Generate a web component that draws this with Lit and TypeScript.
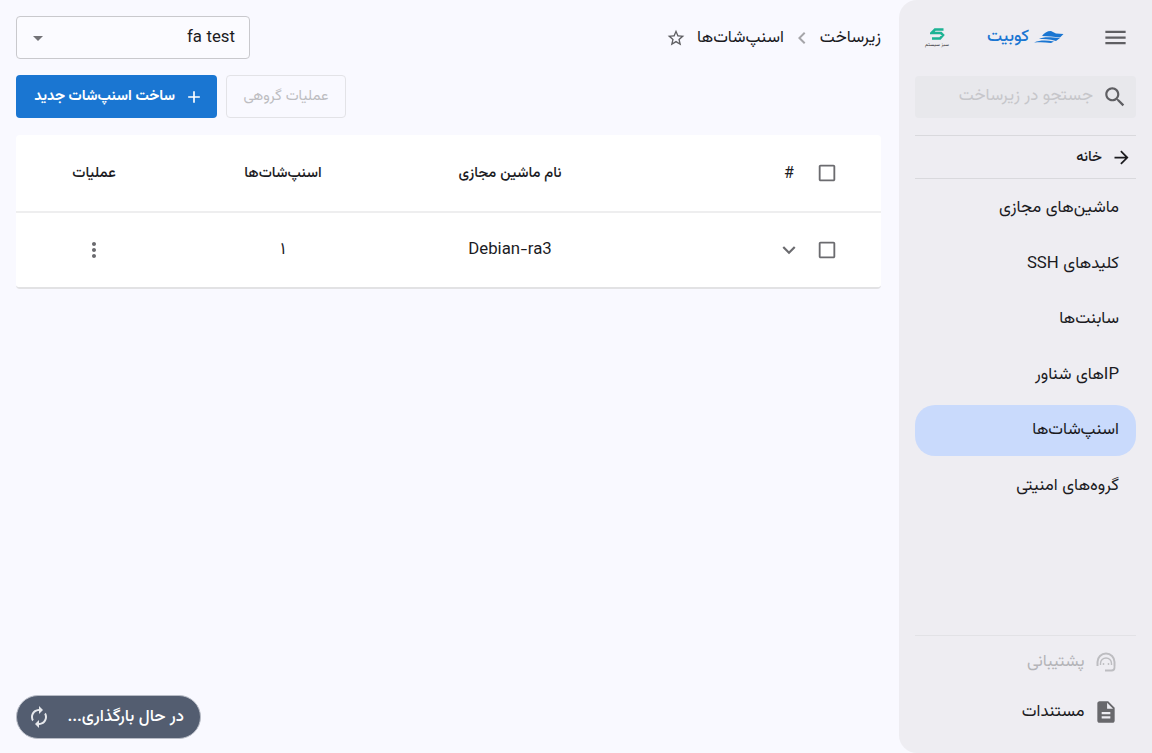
import { LitElement, html, css } from "lit";
import { customElement } from "lit/decorators.js";

const icon = (d: string, size = 24) =>
  html`<svg width=${size} height=${size} viewBox="0 0 24 24" fill="currentColor"><path d=${d}></path></svg>`;

const I = {
  menu: "M3 18h18v-2H3v2zm0-5h18v-2H3v2zm0-7v2h18V6H3z",
  search: "M15.5 14h-.79l-.28-.27C15.41 12.59 16 11.11 16 9.5 16 5.91 13.09 3 9.5 3S3 5.91 3 9.5 5.91 16 9.5 16c1.61 0 3.09-.59 4.23-1.57l.27.28v.79l5 4.99L20.49 19l-4.99-5zm-6 0C7.01 14 5 11.99 5 9.5S7.01 5 9.5 5 14 7.01 14 9.5 11.99 14 9.5 14z",
  arrow: "M12 4l-1.41 1.41L16.17 11H4v2h12.17l-5.58 5.59L12 20l8-8z",
  star: "M22 9.24l-7.19-.62L12 2 9.19 8.63 2 9.24l5.46 4.73L5.82 21 12 17.27 18.18 21l-1.63-7.03L22 9.24zM12 15.4l-3.76 2.27 1-4.28-3.32-2.88 4.38-.38L12 6.1l1.71 4.04 4.38.38-3.32 2.88 1 4.28L12 15.4z",
  chevL: "M15.41 7.41L14 6l-6 6 6 6 1.41-1.41L10.83 12z",
  plus: "M19 13h-6v6h-2v-6H5v-2h6V5h2v6h6v2z",
  check: "M19 5v14H5V5h14m0-2H5c-1.1 0-2 .9-2 2v14c0 1.1.9 2 2 2h14c1.1 0 2-.9 2-2V5c0-1.1-.9-2-2-2z",
  down: "M7.41 8.59L12 13.17l4.59-4.58L18 10l-6 6-6-6z",
  dots: "M12 8c1.1 0 2-.9 2-2s-.9-2-2-2-2 .9-2 2 .9 2 2 2zm0 2c-1.1 0-2 .9-2 2s.9 2 2 2 2-.9 2-2-.9-2-2-2zm0 6c-1.1 0-2 .9-2 2s.9 2 2 2 2-.9 2-2-.9-2-2-2z",
  doc: "M14 2H6c-1.1 0-1.99.9-1.99 2L4 20c0 1.1.89 2 1.99 2H18c1.1 0 2-.9 2-2V8l-6-6zm2 16H8v-2h8v2zm0-4H8v-2h8v2zm-3-5V3.5L18.5 9H13z",
  renew: "M12 6v3l4-4-4-4v3c-4.42 0-8 3.58-8 8 0 1.57.46 3.03 1.24 4.26L6.7 14.8c-.45-.83-.7-1.79-.7-2.8 0-3.31 2.69-6 6-6zm6.76 1.74L17.3 9.2c.44.84.7 1.79.7 2.8 0 3.31-2.69 6-6 6v-3l-4 4 4 4v-3c4.42 0 8-3.58 8-8 0-1.57-.46-3.03-1.24-4.26z",
};

@customElement("app-root")
export class AppRoot extends LitElement {
  static styles = css`
    :host {
      display: block;
      width: 1152px;
      height: 753px;
      overflow: hidden;
      background: #f9f9ff;
      font-family: Vazirmatn, Roboto, "Noto Sans", sans-serif;
      color: #1b1b1f;
    }
    svg { display: block; flex: none; }
    .page { display: flex; direction: rtl; height: 753px; }

    /* Sidebar */
    .side {
      width: 253px; flex: none; box-sizing: border-box;
      background: #eeedf2;
      border-top-left-radius: 18px; border-bottom-left-radius: 18px;
      padding: 16px 16px 0 16px;
      display: flex; flex-direction: column;
    }
    .top { display: flex; align-items: center; height: 42px; padding-right: 7px; }
    .menu { color: #5f5f63; margin-left: 38px; }
    .brand { display: flex; align-items: center; gap: 5px; color: #1a76d2; font-size: 16.8px; font-weight: 500; }
    .sabz { margin-right: auto; width: 22px; margin-left: 11px; display: flex; flex-direction: column; align-items: center; gap: 2px; padding-top: 2px; }
    .sabz span { font-size: 5px; line-height: 6px; color: #333; white-space: nowrap; }
    .search {
      margin-top: 18px; height: 42px; background: #e8e8ec; border-radius: 4px;
      display: flex; align-items: center; padding: 0 8px 0 0; gap: 9px; color: #5f5f63;
    }
    .search span { color: #c6c6ca; font-size: 16.8px; padding-bottom: 3px; }
    .home {
      margin-top: 17px; height: 44px; border-top: 1px solid #d9d9dd; border-bottom: 1px solid #d9d9dd;
      display: flex; align-items: center; padding: 0 4px; gap: 9px; box-sizing: border-box;
      font-size: 14.7px; font-weight: 500;
    }
    .nav { display: flex; flex-direction: column; gap: 4.5px; margin-top: 4px; }
    .nav a {
      height: 51px; box-sizing: border-box; display: flex; align-items: center; padding: 0 17px 1px;
      font-size: 16.8px; border-radius: 20px; color: #1b1b1f;
    }
    .nav a.on { background: #c9dafc; }
    .foot { margin-top: auto; border-top: 1px solid #e2e2e6; padding: 1px 17px 16px 0; }
    .fitem { height: 50px; display: flex; align-items: center; gap: 8.5px; font-size: 16.8px; }
    .fitem.off { color: #b4b4b8; }
    .fitem svg { color: #68686c; }
    .fitem.off svg { color: #bdbdc1; margin: 0 3px; }

    /* Main */
    .main { flex: 1; padding: 16px 18px 0 16px; min-width: 0; position: relative; }
    .head { display: flex; align-items: center; height: 43px; }
    .crumbs { display: flex; align-items: center; font-size: 16.8px; color: #1b1b1f; }
    .crumbs .sep { color: #a5a5a9; margin: 0 6px; }
    .crumbs .star { color: #5f5f63; margin-right: 11px; }
    .select {
      margin-right: auto; width: 234px; height: 43px; box-sizing: border-box;
      border: 1px solid #c9c9cd; border-radius: 4px; background: #fbfbff;
      display: flex; align-items: center; justify-content: space-between; padding: 0 14px 0 16px;
      font-size: 16.8px;
    }
    .caret { width: 0; height: 0; border-left: 5px solid transparent; border-right: 5px solid transparent; border-top: 5px solid #737377; margin-top: 2px; }
    .bar { display: flex; justify-content: flex-end; gap: 9px; margin-top: 16px; height: 43px; }
    .btn { box-sizing: border-box; height: 43px; border-radius: 4px; display: flex; align-items: center; font-size: 14.7px; }
    .btn.off { width: 120px; justify-content: center; border: 1px solid #e3e3e7; color: #bdbdc1; }
    .btn.new { width: 201px; background: #1a76d2; color: #fff; font-weight: 700; padding: 0 13px; gap: 9px; }
    .table {
      margin-top: 17px; background: #fff; border-radius: 4px;
      border-bottom: 2px solid #e2e2e4; box-sizing: border-box; height: 154px;
    }
    .row {
      display: grid; grid-template-columns: 38px 38px 371px 232px 146px;
      padding-right: 35px; align-items: center; font-size: 14.8px; box-sizing: border-box;
    }
    .row.h { height: 78px; border-bottom: 2px solid #eeeeef; font-weight: 500; }
    .row.b { height: 74px; font-size: 16.8px; padding-bottom: 1px; }
    .row > div { display: flex; justify-content: center; color: #1b1b1f; }
    .row > .name { padding-right: 149px; }
    .row > .hash { font-size: 16px; font-weight: 400; padding-top: 2px; }
    .row .ico { color: #6b6b6f; }
    .loading {
      position: absolute; left: 16px; bottom: 14px; width: 185px; height: 44px;
      box-sizing: border-box; border-radius: 22px; background: #535d70; border: 1px solid #b8bcc6;
      color: #fff; display: flex; align-items: center; justify-content: space-between;
      padding: 0 16px 0 10px; font-size: 16.8px; font-weight: 500;
    }
    .loading svg { color: #e6e8ec; }
  `;

  render() {
    return html`
      <div class="page">
        <aside class="side">
          <div class="top">
            <span class="menu">${icon(I.menu, 27)}</span>
            <span class="brand">
              <svg width="30" height="13" viewBox="0 0 30 13" fill="#1a76d2">
                <path d="M8 5C10 2 13 0 17 0L22 2.5L29.5 3L26 6.5C20 6 14 5 8 5Z"></path>
                <path d="M5 8C9 6 14 6 26 7L22 10C15 8 10 8 5 8Z"></path>
                <path d="M0 11.5C6 9 12 9 20 10.5L17 12C11 11 5 11 0 11.5Z"></path>
              </svg>
              <span>کوبیت</span>
            </span>
            <span class="sabz">
              <svg width="15" height="12" viewBox="0 0 15 12" fill="none" stroke="#1db394" stroke-width="2.6">
                <path d="M13.5 1.5H5L1.5 5H11L13 7L10 10.5H2"></path>
              </svg>
              <span>سبز سیستم</span>
            </span>
          </div>
          <div class="search">${icon(I.search, 26)}<span>جستجو در زیرساخت</span></div>
          <div class="home">${icon(I.arrow, 21)}<span>خانه</span></div>
          <nav class="nav">
            <a>ماشین‌های مجازی</a>
            <a>کلیدهای SSH</a>
            <a>سابنت‌ها</a>
            <a>IPهای شناور</a>
            <a class="on">اسنپ‌شات‌ها</a>
            <a>گروه‌های امنیتی</a>
          </nav>
          <div class="foot">
            <div class="fitem off">
              <svg width="20" height="20" viewBox="0 0 20 20" fill="none" stroke="currentColor" stroke-width="2">
                <path d="M1.5 14V10a8.5 8.5 0 0 1 17 0V14"></path>
                <path d="M4.5 13V11.500a5.500 5.500 0 0 1 11 0V13" stroke-width="1.400"></path>
                <path d="M18.500 14V15.500A3 3 0 0 1 15.500 18.500H9" stroke-width="1.800"></path>
                <circle cx="7.500" cy="12" r="0.900" fill="currentColor" stroke="none"></circle>
                <circle cx="12.500" cy="12" r="0.900" fill="currentColor" stroke="none"></circle>
              </svg>
              <span>پشتیبانی</span>
            </div>
            <div class="fitem">${icon(I.doc, 26)}<span>مستندات</span></div>
          </div>
        </aside>
        <main class="main">
          <div class="head">
            <div class="crumbs">
              <span>زیرساخت</span>
              <span class="sep">${icon(I.chevL, 24)}</span>
              <span>اسنپ‌شات‌ها</span>
              <span class="star">${icon(I.star, 20)}</span>
            </div>
            <div class="select"><span>fa test</span><span class="caret"></span></div>
          </div>
          <div class="bar">
            <div class="btn off">عملیات گروهی</div>
            <div class="btn new">${icon(I.plus, 20)}<span>ساخت اسنپ‌شات جدید</span></div>
          </div>
          <div class="table">
            <div class="row h">
              <div class="ico">${icon(I.check, 22)}</div>
              <div class="hash">#</div>
              <div class="name">نام ماشین مجازی</div>
              <div>اسنپ‌شات‌ها</div>
              <div>عملیات</div>
            </div>
            <div class="row b">
              <div class="ico">${icon(I.check, 22)}</div>
              <div class="ico">${icon(I.down, 26)}</div>
              <div class="name">Debian-ra3</div>
              <div>۱</div>
              <div class="ico">${icon(I.dots, 24)}</div>
            </div>
          </div>
          <div class="loading">
            <span>در حال بارگذاری...</span>
            ${icon(I.renew, 24)}
          </div>
        </main>
      </div>
    `;
  }
}
